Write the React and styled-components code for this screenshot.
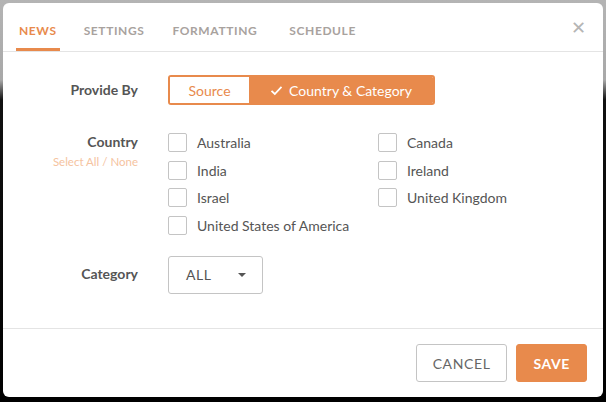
import React, { useState } from 'react'
import styled, { createGlobalStyle } from 'styled-components'

const orange = '#e88a4c'

const GlobalStyle = createGlobalStyle`
  * { margin: 0; padding: 0; box-sizing: border-box; }
  html, body { height: 100%; }
  body {
    background: linear-gradient(to bottom, #b4b4b4 0px, #a8a8a8 80px, #111 100px, #000 100%);
    font-family: Lato, "Open Sans", sans-serif;
    padding: 3px;
  }
`

const Modal = styled.div`
  background: #fff;
  border-radius: 6px;
  width: 600px;
  height: 394px;
  display: flex;
  flex-direction: column;
`

const Header = styled.div`
  display: flex;
  align-items: flex-end;
  height: 49px;
  padding: 0 13px;
  border-bottom: 1px solid #e4e4e4;
  position: relative;
`

const Tab = styled.div`
  font-size: 12px;
  font-weight: 700;
  letter-spacing: 0.6px;
  color: ${p => (p.active ? orange : '#a8a29e')};
  padding: 0 3px 10px;
  margin-right: ${p => p.gap}px;
  border-bottom: 3px solid ${p => (p.active ? orange : 'transparent')};
`

const Close = styled.div`
  position: absolute;
  right: 17px;
  top: 13px;
  color: #b5b5b5;
  font-size: 18px;
`

const Body = styled.div`
  flex: 1;
  padding-top: 23px;
  border-bottom: 1px solid #e4e4e4;
`

const Row = styled.div`
  display: grid;
  grid-template-columns: 135px 1fr;
  column-gap: 30px;
  margin-bottom: ${p => p.mb || 0}px;
`

const LabelCol = styled.div`
  text-align: right;
  padding-top: ${p => p.pt || 0}px;
`

const Label = styled.div`
  font-size: 14px;
  font-weight: 700;
  color: #555;
`

const SelectLinks = styled.div`
  font-size: 11.5px;
  color: #f5c3a0;
  margin-top: 5px;
`

const Segment = styled.div`
  display: flex;
  width: 267px;
  height: 30px;
  border: 2px solid ${orange};
  border-radius: 3px;
  overflow: hidden;
`

const SegButton = styled.div`
  display: flex;
  align-items: center;
  justify-content: center;
  gap: 6px;
  font-size: 14px;
  width: ${p => p.w}px;
  flex: ${p => (p.w ? 'none' : 1)};
  background: ${p => (p.active ? orange : '#fff')};
  color: ${p => (p.active ? '#fff' : orange)};
`

const Grid = styled.div`
  display: grid;
  grid-template-columns: 210px 210px;
  row-gap: 8.5px;
`

const CheckItem = styled.label`
  display: flex;
  align-items: center;
  gap: 10px;
  font-size: 14px;
  color: #555;
  height: 19px;
`

const Box = styled.span`
  width: 19px;
  height: 19px;
  border: 1px solid #c4c4c4;
  border-radius: 2px;
  background: #fff;
`

const Select = styled.div`
  width: 95px;
  height: 38px;
  border: 1px solid #c4c4c4;
  border-radius: 3px;
  display: flex;
  align-items: center;
  justify-content: space-between;
  padding: 0 16px 0 17px;
  font-size: 14px;
  color: #555;
  letter-spacing: 0.5px;
`

const Caret = styled.span`
  width: 0;
  height: 0;
  border-left: 4px solid transparent;
  border-right: 4px solid transparent;
  border-top: 4px solid #555;
`

const Footer = styled.div`
  height: 68px;
  display: flex;
  justify-content: flex-end;
  align-items: center;
  gap: 9px;
  padding: 0 16px 0 0;
`

const Button = styled.button`
  height: 38px;
  padding: 0 ${p => p.px}px;
  font-family: inherit;
  font-size: 14px;
  letter-spacing: 0.6px;
  border-radius: 3px;
  border: 1px solid ${p => (p.primary ? orange : '#c4c4c4')};
  background: ${p => (p.primary ? orange : '#fff')};
  color: ${p => (p.primary ? '#fff' : '#666')};
  font-weight: ${p => (p.primary ? 700 : 400)};
`

const countries = [
  'Australia', 'Canada',
  'India', 'Ireland',
  'Israel', 'United Kingdom',
  'United States of America'
]

export default function App() {
  const [mode] = useState('country')
  return (
    <Modal>
      <GlobalStyle />
      <Header>
        <Tab active gap={21}>NEWS</Tab>
        <Tab gap={22}>SETTINGS</Tab>
        <Tab gap={26}>FORMATTING</Tab>
        <Tab>SCHEDULE</Tab>
        <Close>✕</Close>
      </Header>
      <Body>
        <Row mb={28}>
          <LabelCol pt={6}><Label>Provide By</Label></LabelCol>
          <Segment>
            <SegButton w={79} active={mode === 'source'}>Source</SegButton>
            <SegButton active={mode === 'country'}>
              <svg width="13" height="11" viewBox="0 0 13 11">
                <path d="M1.5 5.8 L4.8 9 L11.5 1.8" fill="none" stroke="#fff" strokeWidth="1.8" />
              </svg>
              Country &amp; Category
            </SegButton>
          </Segment>
        </Row>
        <Row mb={21}>
          <LabelCol>
            <Label>Country</Label>
            <SelectLinks>Select All / None</SelectLinks>
          </LabelCol>
          <Grid>
            {countries.map(c => (
              <CheckItem key={c}>
                <Box />
                {c}
              </CheckItem>
            ))}
          </Grid>
        </Row>
        <Row>
          <LabelCol pt={9}><Label>Category</Label></LabelCol>
          <div>
            <Select>ALL<Caret /></Select>
          </div>
        </Row>
      </Body>
      <Footer>
        <Button px={16}>CANCEL</Button>
        <Button primary px={16}>SAVE</Button>
      </Footer>
    </Modal>
  )
}
